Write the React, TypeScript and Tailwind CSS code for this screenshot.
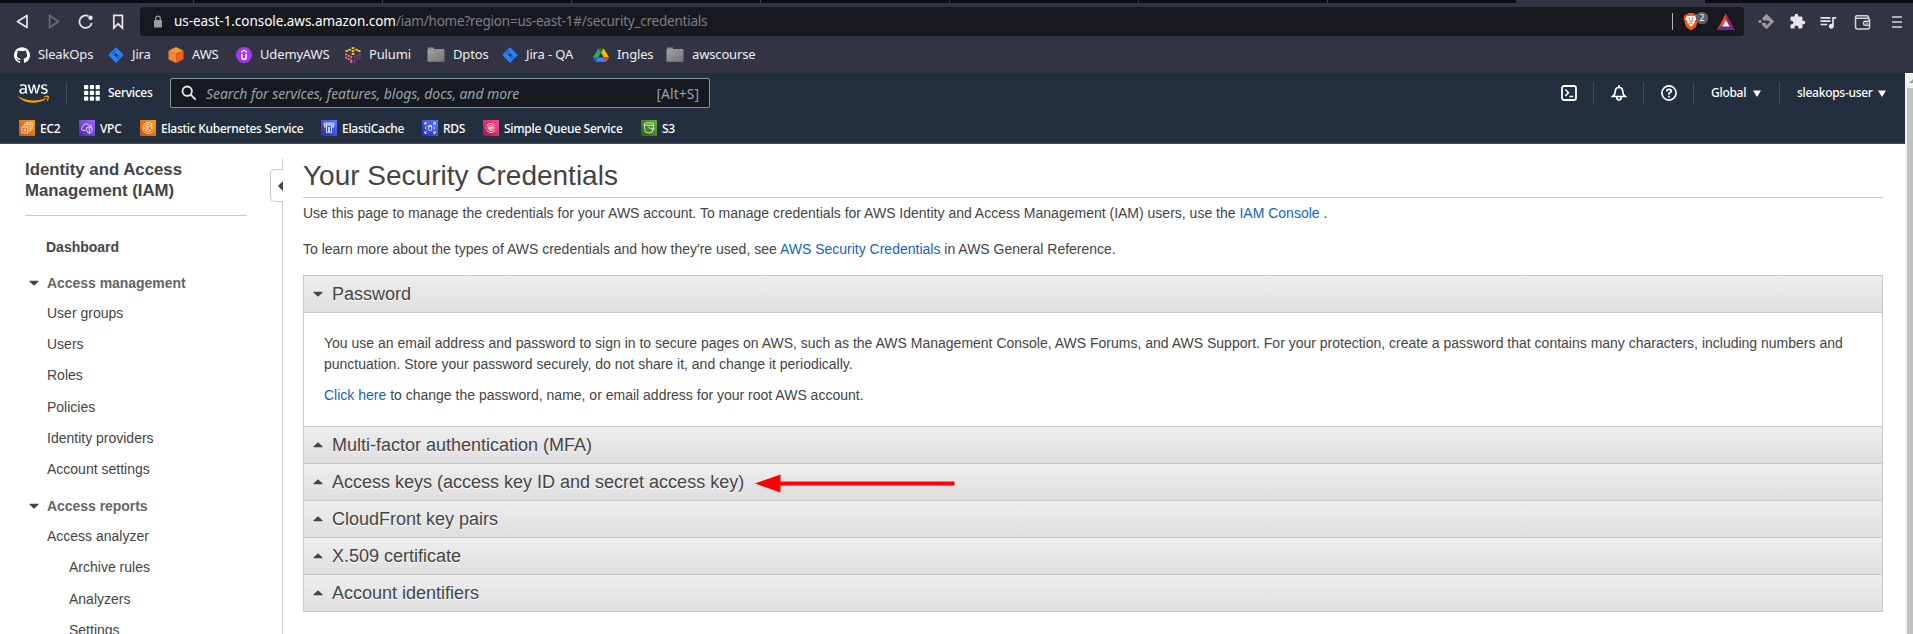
import React from 'react';
import { SiGithub, SiBrave } from 'react-icons/si';
import { FaAws } from 'react-icons/fa';
import { MdExtension, MdQueueMusic } from 'react-icons/md';

function Folder() {
  return (
    <svg width="18" height="16" viewBox="0 0 18 16">
      <defs>
        <linearGradient id="fold" x1="0" y1="0" x2="1" y2="1">
          <stop offset="0" stopColor="#a3a3a6" />
          <stop offset="1" stopColor="#747476" />
        </linearGradient>
      </defs>
      <path d="M1 0.500h6v1.500H17v12.500H1z" fill="#8b8b8b" />
      <path d="M0.500 2.500h17v12h-17z" fill="url(#fold)" />
    </svg>
  );
}

function JiraIcon() {
  return (
    <svg width="16" height="16" viewBox="0 0 16 16">
      <path d="M8 0.300 15.700 8 8 15.700 0.300 8Z" fill="#2684ff" />
      <path d="M8 3v2.700L5.700 8 3.800 6.500Q4 5 8 3Z" fill="#1a6ae0" />
      <path d="M8 13v-2.700L10.300 8l1.900 1.500Q12 11 8 13Z" fill="#1a6ae0" />
      <path d="M8 5.900 10.100 8 8 10.100 5.900 8Z" fill="#323443" />
    </svg>
  );
}

function CubeIcon() {
  return (
    <svg width="16" height="16" viewBox="0 0 16 16">
      <path d="M8 0 15.500 3.700 8 6.400 0.500 3.700Z" fill="#f89a2b" />
      <path d="M0.500 3.700 8 6.400V16L0.500 12.300Z" fill="#f58536" />
      <path d="M15.500 3.700 8 6.400V16l7.500-3.700Z" fill="#e8641b" />
    </svg>
  );
}

function UdemyIcon() {
  return (
    <svg width="16" height="16" viewBox="0 0 16 16">
      <circle cx="8" cy="8" r="8" fill="#a435f0" />
      <path d="M5 5.200 8 3.300l3 1.900" fill="none" stroke="#fff" strokeWidth="1.300" />
      <path d="M5.900 6.700v3.500a2.100 2.100 0 0 0 4.200 0V6.700" fill="none" stroke="#fff" strokeWidth="1.600" />
    </svg>
  );
}

const pulumiTop = [[8, 1.100], [4.500, 2.700], [11.500, 2.700], [1.800, 4.100], [8, 4.100], [14.200, 4.100], [8, 6.900]];
const pulumiSide = [[1.100, 7.400], [3.700, 8.800], [6.300, 10.100], [1.100, 10.700], [3.700, 12.100], [6.300, 13.400], [6.300, 15.500]];

function PulumiIcon() {
  return (
    <svg width="16" height="16" viewBox="0 0 16 16">
      {pulumiTop.map(([x, y], i) => <ellipse key={i} cx={x} cy={y} rx="1.700" ry="1.050" fill="#f7bf2a" />)}
      {pulumiSide.map(([x, y], i) => <ellipse key={i} cx={x} cy={y} rx="1.050" ry="1.250" fill="#f26e7e" />)}
      {pulumiSide.map(([x, y], i) => <ellipse key={i} cx={16 - x} cy={y} rx="1.050" ry="1.250" fill="#8a3391" />)}
    </svg>
  );
}

function DriveIcon() {
  return (
    <svg width="16" height="14" viewBox="0 0 16 14">
      <path d="M5.300 0.400h5.400L8 5Z" fill="#188038" />
      <path d="M5.300 0.400 8 5 2.800 13.700 0 9.200Z" fill="#34a853" />
      <path d="M10.700 0.400 16 9.200h-5.400L8 5Z" fill="#fbbc04" />
      <path d="M2.800 13.700 5.400 9.200h5.200l2.600 4.500Z" fill="#4285f4" />
      <path d="M10.600 9.200H16l-2.800 4.500Z" fill="#ea4335" />
      <path d="M0 9.200h5.400l-2.600 4.500Z" fill="#1967d2" />
      <path d="M8 5 5.400 9.200h5.200Z" fill="#323443" />
    </svg>
  );
}

const bookmarks = [
  { label: 'SleakOps', w: 'w-[94px]', icon: <SiGithub size={16} color="#fff" /> },
  { label: 'Jira', w: 'w-[60px]', icon: <JiraIcon /> },
  { label: 'AWS', w: 'w-[68px]', icon: <CubeIcon /> },
  { label: 'UdemyAWS', w: 'w-[109px]', icon: <UdemyIcon /> },
  { label: 'Pulumi', w: 'w-[82px]', icon: <PulumiIcon /> },
  { label: 'Dptos', w: 'w-[75px]', icon: <Folder /> },
  { label: 'Jira - QA', w: 'w-[91px]', icon: <JiraIcon /> },
  { label: 'Ingles', w: 'w-[73px]', icon: <DriveIcon /> },
  { label: 'awscourse', w: 'w-[100px]', icon: <Folder /> },
];

const line = { fill: 'none', stroke: '#fff', strokeWidth: 0.9, strokeOpacity: 0.85 };

const services = [
  { label: 'EC2', w: 'w-[60px]', bg: 'bg-linear-to-tr from-[#c8511b] to-[#ff9900]',
    icon: <g {...line}><rect x="2.800" y="7" width="6" height="6" /><path d="M5 6.500V4.700h6.200v6.200H9.500M7.200 4.200V2.800h6v6h-1.500M5 9.200h1.700v1.600H5z" /></g> },
  { label: 'VPC', w: 'w-[61px]', bg: 'bg-linear-to-tr from-[#4d27a8] to-[#a166ff]',
    icon: <g {...line}><path d="M6.500 10.500H4.300a2 2 0 0 1-.3-3.900 3.200 3.200 0 0 1 6-1.100 2 2 0 0 1 2.800 1.300" /><path d="M10.300 6.800 13 7.800v2.500q-.4 2.200-2.700 3.200-2.300-1-2.700-3.200V7.800zM10.300 7v6" /></g> },
  { label: 'Elastic Kubernetes Service', w: 'w-[181px]', bg: 'bg-linear-to-tr from-[#c8511b] to-[#ff9900]',
    icon: <g {...line}><path d="M12.800 4.800A5.500 5.500 0 1 0 12.800 11.200" /><circle cx="8" cy="8" r="3.400" /><path d="M7 6v4M9.300 6 7.200 8l2.100 2M11.500 3.500v2M13.200 6.500v3" /></g> },
  { label: 'ElastiCache', w: 'w-[101px]', bg: 'bg-linear-to-tr from-[#2e27ad] to-[#527fff]',
    icon: <g {...line}><path d="M3 3h10v2H3zM3.500 5v2h2M12.500 5v2h-2M5.500 5v7.500h2V7M10.500 5v7.500h-2V7M5 4h6" /></g> },
  { label: 'RDS', w: 'w-[61px]', bg: 'bg-linear-to-tr from-[#2e27ad] to-[#527fff]',
    icon: <g {...line}><path d="M2.700 4.700V2.700H4.700M11.300 2.700h2v2M2.700 11.300v2H4.700M11.300 13.300h2v-2M3 3l2 2M13 3l-2 2M3 13l2-2M13 13l-2-2" /><ellipse cx="8" cy="6" rx="1.700" ry=".7" /><path d="M6.300 6v4q1.700 1.300 3.400 0V6M4 6.500q-1 1.500 0 3M12 6.500q1 1.500 0 3" /></g> },
  { label: 'Simple Queue Service', w: 'w-[158px]', bg: 'bg-linear-to-tr from-[#b0084d] to-[#ff4f8b]',
    icon: <g {...line}><path d="M3.800 6a4.700 4.700 0 0 1 8.400 0M3.800 10a4.700 4.700 0 0 0 8.400 0M2.500 8h2M11.500 8h2" /><circle cx="8" cy="8" r="2.500" /><path d="M6.500 7.300h3L6.500 9h3" /></g> },
  { label: 'S3', w: 'w-[60px]', bg: 'bg-linear-to-tr from-[#1b660f] to-[#6cae3e]',
    icon: <g {...line}><path d="M3 4.500 4.300 12q3.700 1.800 7 0L12.700 4.500" /><ellipse cx="7.900" cy="4.200" rx="4.900" ry="1.300" /><path d="M7.500 7.500 12.500 9.500q1.300.2.300-1.500" /></g> },
];

function Caret({ up = false }: { up?: boolean }) {
  return (
    <svg className="shrink-0" width="10" height="6" viewBox="0 0 10 6">
      <path d={up ? 'M5 0.300 9.500 4.500V5.300H0.500V4.500Z' : 'M0.500 0.700H9.500V1.500L5 5.700 0.500 1.500Z'} fill="#444" />
    </svg>
  );
}

function AccessKeysArrow() {
  return (
    <svg className="absolute top-[2px] left-[422px]" width="204" height="24" viewBox="0 0 204 24">
      <path d="M1 12.500 26.500 3.500V10.500H200.500V14.500H26.500V21.500Z" fill="#f00" />
    </svg>
  );
}

type PanelProps = { title: string; open?: boolean; marker?: React.ReactNode };

function Panel({ title, open = false, marker }: PanelProps) {
  return (
    <section className="border-b border-[#c8c8c8]">
      <h2 className="flex h-9 items-center gap-[9px] bg-linear-to-b from-[#eeeeee] to-[#dfdfdf] pl-[9px] text-[18px] [text-shadow:0_1px_0_#fff]">
        <Caret up={!open} />
        <span className="relative">{title}{marker}</span>
      </h2>
    </section>
  );
}

function AddressBar() {
  return (
    <div className="flex h-[37px] items-center">
      <svg className="shrink-0" width="140" height="30" viewBox="0 0 140 30" fill="none" stroke="#e8e8ea" strokeWidth="1.700" strokeLinejoin="round">
        <path d="M27 8.500V20.500L17.500 14.500Z" />
        <path d="M49.500 8.500V20.500L58.500 14.500Z" stroke="#6b6c78" />
        <path d="M88.500 9.200a6.200 6.200 0 1 0 3.200 6.800" />
        <circle cx="90.500" cy="10.700" r="2.200" fill="#e8e8ea" stroke="none" />
        <path d="M113.800 8.300h8.600v12.700l-4.300-4.200-4.300 4.200Z" strokeLinejoin="miter" />
      </svg>
      <div className="flex h-[29px] w-[1604px] shrink-0 items-center rounded bg-[#17191f] pl-[11px] text-[13.500px] text-[#7d7f86]">
        <svg width="14" height="14" viewBox="0 0 14 14">
          <rect x="3" y="5" width="8" height="7.500" rx=".8" fill="#9a9ca3" />
          <path d="M4.700 5.500V3.500a2.300 2.300 0 0 1 4.600 0v2" fill="none" stroke="#9a9ca3" strokeWidth="1.200" />
        </svg>
        <div className="ml-[9px] grow tracking-[-0.220px]"><span className="tracking-[-0.050px] text-white">us-east-1.console.aws.amazon.com</span>/iam/home?region=us-east-1#/security_credentials</div>
        <svg width="74" height="26" viewBox="0 0 74 26">
          <path d="M2.500 4v17" stroke="#b4b5ba" />
          <path d="M16 6h10l1.500 4-2 8-4.500 3-4.500-3-2-8Z" fill="#fff" />
          <SiBrave x="12.500" y="4" size={17} color="#ff5014" />
          <rect x="26" y="3" width="12" height="12" rx="5.500" fill="#5f616e" />
          <text x="32" y="12" fill="#fff" fontSize="8.500" fontFamily="Noto Sans" textAnchor="middle">2</text>
          <path d="M56 4.500 47 21h5.500L56 14Z" fill="#ff4724" />
          <path d="M56 4.500 65 21H59.500L56 14Z" fill="#9e1f63" />
          <path d="M47 21h18l-3.500-3.700h-11Z" fill="#662d91" />
          <path d="M56 11 59.500 17.500h-7Z" fill="#fff" />
        </svg>
      </div>
      <div className="flex shrink-0 items-center pl-[13px]">
        <svg width="18" height="18" viewBox="0 0 18 18">
          <path d="M9.500 0.800 17.200 8.500 9.500 16.200 5 11.700V10h4v2.500l4-3.500-2-1.500H6.500L5 5.500Z" fill="#9b9b9b" />
          <circle cx="3" cy="8.500" r="1.600" fill="#9b9b9b" />
        </svg>
        <MdExtension size={17} color="#e6e6e8" className="ml-[14px]" />
        <MdQueueMusic size={20} color="#e6e6e8" className="ml-[12px]" />
        <svg className="ml-[16px]" width="18" height="18" viewBox="0 0 18 18" fill="none" stroke="#d6d6da" strokeWidth="1.500">
          <path d="M1.500 5v9q0 2 2 2h10q2 0 2-2v-7q0-1.700-2-1.700H3Q1.500 5.300 1.500 4t1.500-1.200h10q1.500 0 1.500 2" />
          <path d="M16 8.300h-4.500q-2 0-2 2t2 2H16" />
          <circle cx="12.700" cy="10.300" r=".3" />
        </svg>
        <svg className="ml-[19px]" width="12" height="14" viewBox="0 0 12 14">
          <path d="M1 2h10M1 7h10M1 12h10" stroke="#d6d6da" strokeWidth="1.600" />
        </svg>
      </div>
    </div>
  );
}

function TabStrip() {
  return (
    <div className="flex h-[3px] bg-[#0c0c14]">
      <div className="w-[194px] border-r border-[#3a3b45]" />
      {[1, 2, 3, 4, 5, 6].map((n) => <div key={n} className="w-[189px] border-r border-[#3a3b45]" />)}
      <div className="w-[188px]" />
      <div className="w-[189px] bg-[#323443]" />
    </div>
  );
}

function Divider() {
  return <div className="h-[22px] w-px shrink-0 bg-[#414d5c]" />;
}

function DownArrow() {
  return <svg width="8" height="7" viewBox="0 0 8 7"><path d="M0 .5h8L4 7Z" fill="#fff" /></svg>;
}

function AwsHeader() {
  return (
    <header className="h-[71px] border-b border-[#414d5c] bg-[#232f3e] text-[12px] font-medium tracking-[-0.280px] text-white">
      <div className="flex h-10 items-center">
        <div className="flex w-[66px] shrink-0 items-center pl-[18px]">
          <svg width="0" height="0">
            <linearGradient id="aws-fill" gradientUnits="userSpaceOnUse" x1="0" y1="0" x2="0" y2="512">
              <stop offset="0.620" stopColor="#fff" />
              <stop offset="0.620" stopColor="#f90" />
            </linearGradient>
          </svg>
          <FaAws size={31} fill="url(#aws-fill)" />
        </div>
        <Divider />
        <div className="flex w-[103px] shrink-0 items-center gap-2 pl-[17px]">
          <svg width="16" height="16" viewBox="0 0 16 16" fill="#fff">
            {[0, 5.800, 11.600].map((y) => [0, 5.800, 11.600].map((x) => <rect key={`${x}-${y}`} x={x} y={y} width="4.200" height="4.200" rx=".8" />))}
          </svg>
          Services
        </div>
        <div className="flex h-[30px] w-[540px] shrink-0 items-center rounded-[2px] border border-[#879596] bg-[#16191f] px-[10px] text-[14px] font-normal tracking-[-0.070px] text-[#95a5a6]">
          <svg width="16" height="16" viewBox="0 0 16 16" fill="none" stroke="#eaeded" strokeWidth="1.800">
            <circle cx="6.200" cy="6.200" r="4.700" /><path d="m9.700 9.700 5 5" />
          </svg>
          <i className="ml-[9px] grow pt-px">Search for services, features, blogs, docs, and more</i>
          <span className="pt-px tracking-normal">[Alt+S]</span>
        </div>
        <div className="ml-auto flex items-center">
          <svg className="mr-4" width="16" height="16" viewBox="0 0 16 16" fill="none" stroke="#fff" strokeWidth="1.800">
            <rect x="1" y="1" width="14" height="14" rx="2" /><path d="m4.300 4.500 3.200 3.200-3.200 3.200M8.300 11.600h4" strokeWidth="1.500" />
          </svg>
          <Divider />
          <svg className="mr-4 ml-[17px]" width="16" height="16" viewBox="0 0 16 16" fill="none" stroke="#fff" strokeWidth="1.700">
            <path d="M8 0v2M4.200 7Q4.200 2.500 8 2.500T11.800 7q0 2.500 2.500 4.500H1.700Q4.200 9.500 4.200 7ZM5.800 12q0 3 2.200 3t2.200-3" />
          </svg>
          <Divider />
          <svg className="mr-4 ml-[17px]" width="16" height="16" viewBox="0 0 16 16" fill="none" stroke="#fff" strokeWidth="1.700">
            <circle cx="8" cy="8" r="7.100" /><path d="M5.700 6.500Q5.700 4.300 8 4.300t2.300 2Q10.300 7.500 8 8.200v1.500M8 10.800v1.600" />
          </svg>
          <Divider />
          <div className="flex w-[85px] shrink-0 items-center justify-between pr-[18px] pl-[17px]">Global<DownArrow /></div>
          <Divider />
          <div className="flex w-[125px] shrink-0 items-center justify-between pr-[19px] pl-[17px]">sleakops-user<DownArrow /></div>
        </div>
      </div>
      <div className="flex h-[30px] items-center pl-[19px]">
        {services.map((s) => (
          <div key={s.label} className={`flex shrink-0 items-center gap-[5px] whitespace-nowrap ${s.w}`}>
            <div className={`size-4 shrink-0 ${s.bg}`}><svg width="16" height="16" viewBox="0 0 16 16">{s.icon}</svg></div>
            <span className="pt-px">{s.label}</span>
          </div>
        ))}
      </div>
    </header>
  );
}

function NavGroup({ title }: { title: string }) {
  return (
    <div className="flex h-[30px] items-center gap-2 pl-[4px] font-bold tracking-[-0.040px] text-[#666]"><Caret />{title}</div>
  );
}

function NavItem({ children, nested = false }: { children: string; nested?: boolean }) {
  return <div className={`flex h-[31.200px] items-center ${nested ? 'pl-[44px]' : 'pl-[22px]'}`}>{children}</div>;
}

function Sidebar() {
  return (
    <aside className="h-[490px] w-[247px] shrink-0 overflow-hidden pl-[25px] text-[14px]">
      <h1 className="mt-[15px] h-[57px] border-b border-[#c8c8c8] text-[16.800px] leading-[21px] font-bold">Identity and Access<br />Management (IAM)</h1>
      <nav>
        <div className="mt-4 flex h-[31px] items-center pl-[21px] font-bold">Dashboard</div>
        <div className="mt-[5px]">
          <NavGroup title="Access management" />
          {['User groups', 'Users', 'Roles', 'Policies', 'Identity providers', 'Account settings'].map((t) => <NavItem key={t}>{t}</NavItem>)}
        </div>
        <div className="mt-[6px]">
          <NavGroup title="Access reports" />
          <NavItem>Access analyzer</NavItem>
          {['Archive rules', 'Analyzers', 'Settings'].map((t) => <NavItem key={t} nested>{t}</NavItem>)}
        </div>
      </nav>
    </aside>
  );
}

function CollapseRail() {
  return (
    <div className="ml-[23px] flex h-[490px] w-[13px] shrink-0 flex-col pt-[15px]">
      <div className="h-[10px] border-r border-[#c8c8c8]" />
      <div className="flex h-[33px] items-center justify-end rounded-l-[5px] border border-r-0 border-[#c8c8c8]">
        <svg width="5" height="10" viewBox="0 0 5 10"><path d="M5 0v10L0 5Z" fill="#444" /></svg>
      </div>
      <div className="grow border-r border-[#c8c8c8]" />
    </div>
  );
}

function Link({ children }: { children: string }) {
  return <a className="text-[#1166bb]">{children}</a>;
}

export default function App() {
  return (
    <div className="flex h-[634px] w-[1913px] flex-col overflow-hidden bg-white font-['Liberation_Sans',Arial,sans-serif] text-[#444]">
      <div className="h-[73px] shrink-0 bg-[#323443] font-['Noto_Sans',sans-serif]">
        <TabStrip />
        <AddressBar />
        <div className="flex h-[29px] items-center pl-[14px] text-[13px] tracking-[-0.150px] text-[#eeeef2]">
          {bookmarks.map((b) => (
            <div key={b.label} className={`flex shrink-0 items-center gap-2 whitespace-nowrap ${b.w}`}>{b.icon}{b.label}</div>
          ))}
        </div>
      </div>
      <div className="flex min-h-0 grow">
        <div className="w-[1905px] shrink-0">
          <div className="font-['Noto_Sans',sans-serif]"><AwsHeader /></div>
          <div className="flex">
            <Sidebar />
            <CollapseRail />
            <main className="ml-5 w-[1580px] text-[14px]">
              <h1 className="mt-[15px] h-[39px] border-b border-[#c8c8c8] text-[28px] leading-[34px]">Your Security Credentials</h1>
              <p className="mt-[5px] leading-5">Use this page to manage the credentials for your AWS account. To manage credentials for AWS Identity and Access Management (IAM) users, use the <Link>IAM Console</Link> .</p>
              <p className="mt-4 leading-5">To learn more about the types of AWS credentials and how they're used, see <Link>AWS Security Credentials</Link> in AWS General Reference.</p>
              <div className="mt-4 border border-b-0 border-[#c8c8c8]">
                <Panel title="Password" open />
                <div className="h-[114px] border-b border-[#c8c8c8] px-5 pt-5 leading-[21px]">
                  <p>You use an email address and password to sign in to secure pages on AWS, such as the AWS Management Console, AWS Forums, and AWS Support. For your protection, create a password that contains many characters, including numbers and punctuation. Store your password securely, do not share it, and change it periodically.</p>
                  <p className="mt-[10px]"><Link>Click here</Link> to change the password, name, or email address for your root AWS account.</p>
                </div>
                <Panel title="Multi-factor authentication (MFA)" />
                <Panel title="Access keys (access key ID and secret access key)" marker={<AccessKeysArrow />} />
                <Panel title="CloudFront key pairs" />
                <Panel title="X.509 certificate" />
                <Panel title="Account identifiers" />
              </div>
            </main>
          </div>
        </div>
        <div className="flex w-2 shrink-0 flex-col bg-[#f1f1f1] pl-[2px]">
          <svg className="h-[15px] w-[6px] shrink-0" viewBox="0 0 6 15"><path d="M2 10 6 6V10Z" fill="#a3a3a3" /></svg>
          <div className="grow bg-[#c1c1c1]" />
        </div>
      </div>
    </div>
  );
}
